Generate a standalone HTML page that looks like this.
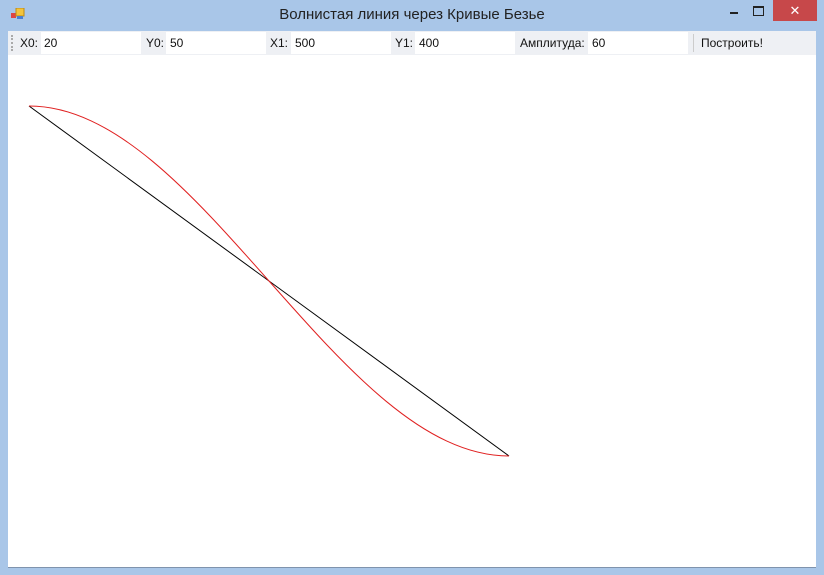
<!DOCTYPE html>
<html><head><meta charset="utf-8"><style>
body{margin:0;width:824px;height:575px;background:#a9c6e8;position:relative;overflow:hidden;font-family:"Segoe UI","Liberation Sans","DejaVu Sans",sans-serif;}
.title{position:absolute;top:6px;left:0;width:824px;text-align:center;font-size:15px;color:#222;}
.client{position:absolute;left:8px;top:31px;width:808px;height:536px;background:#fff;border-bottom:1px solid #7f93ad;}
.tb{position:absolute;left:0;top:0;width:808px;height:24px;background:#eef0f4;font-size:12px;color:#111;}
.tb span{position:absolute;top:5px;}
.tb .in{position:absolute;top:1px;height:22px;background:#fff;}
.close{position:absolute;left:773px;top:0;width:44px;height:21px;background:#c7484a;color:#fff;text-align:center;font-size:13px;line-height:21px;}
</style></head><body>
<svg style="position:absolute;left:11px;top:8px" width="14" height="12"><rect x="0" y="5" width="5" height="5" fill="#d44"/><rect x="5" y="0" width="8" height="8" fill="#f2c43c" stroke="#c08a10"/><rect x="6" y="8" width="6" height="3" fill="#4a7fd0"/></svg>
<div class="title">Волнистая линия через Кривые Безье</div>
<div style="position:absolute;left:730px;top:12px;width:8px;height:2px;background:#222"></div>
<div style="position:absolute;left:753px;top:6px;width:9px;height:7px;border:1px solid #222;border-top-width:2px"></div>
<div class="close">✕</div>
<div class="client">
<div class="tb">
<div style="position:absolute;left:3px;top:4px;width:1px;height:16px;border-left:2px dotted #aaa"></div>
<span style="left:12px">X0:</span><div class="in" style="left:33px;width:100px"></div><span style="left:36px">20</span>
<span style="left:138px">Y0:</span><div class="in" style="left:158px;width:100px"></div><span style="left:162px">50</span>
<span style="left:262px">X1:</span><div class="in" style="left:283px;width:100px"></div><span style="left:287px">500</span>
<span style="left:387px">Y1:</span><div class="in" style="left:407px;width:100px"></div><span style="left:411px">400</span>
<span style="left:512px">Амплитуда:</span><div class="in" style="left:580px;width:100px"></div><span style="left:584px">60</span>
<div style="position:absolute;left:685px;top:3px;width:1px;height:18px;background:#ccc"></div>
<span style="left:693px">Построить!</span>
</div>
</div>
<svg style="position:absolute;left:0;top:0" width="824" height="575">
<line x1="29" y1="106" x2="509" y2="456" stroke="#000" stroke-width="1"/>
<path d="M29 106 C199 106 339 456 509 456" fill="none" stroke="#e02020" stroke-width="1"/>
</svg>
</body></html>
